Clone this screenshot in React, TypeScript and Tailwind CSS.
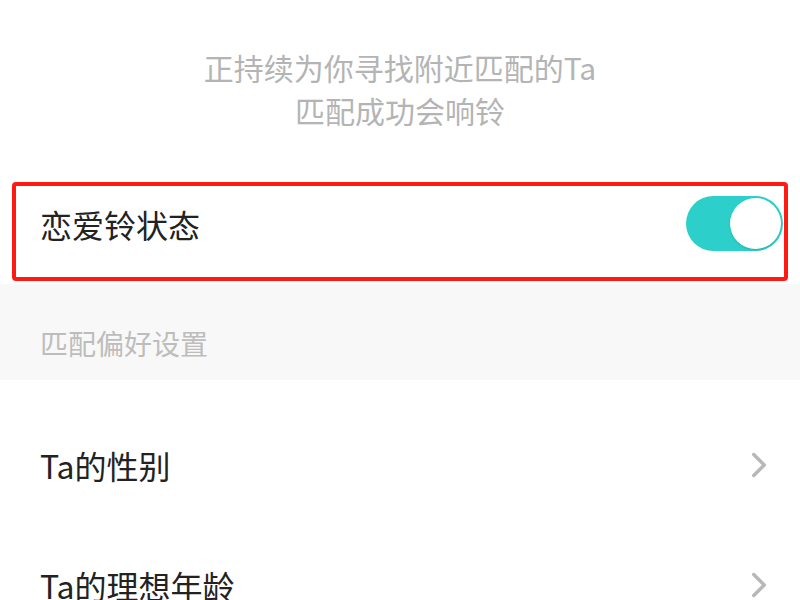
import { ChevronRight } from 'lucide-react';

const FONT = { fontFamily: '"Noto Sans CJK SC", "Noto Sans", sans-serif' };

const PREFS = ['Ta的性别', 'Ta的理想年龄'];

export default function App() {
  return (
    <div className="h-[600px] w-[800px] overflow-hidden bg-white" style={FONT}>
      {/* searching hint */}
      <div className="flex flex-col items-center pt-[46px] text-[30px] leading-[43px] text-[#b4b4b4]">
        <p>正持续为你寻找附近匹配的Ta</p>
        <p>匹配成功会响铃</p>
      </div>

      {/* love bell status, highlighted */}
      <div className="mx-[12px] mt-[50px] flex h-[99px] items-center justify-between rounded-[4px] border-[4px] border-[#ff1a14] pb-[16px] pl-[24px] pr-[1px]">
        <span className="text-[32px] text-[#222]">恋爱铃状态</span>
        <div className="flex h-[55px] w-[97px] items-center justify-end rounded-full bg-[#2ccfc9] p-[2px]">
          <span className="h-[51px] w-[51px] rounded-full bg-white shadow-[0_1px_2px_rgba(0,0,0,0.15)]" />
        </div>
      </div>

      {/* section header */}
      <div className="mt-[3px] flex h-[96px] items-center bg-[#f8f8f8] px-[40px] pt-[22px] text-[28px] text-[#bdbdbd]">
        匹配偏好设置
      </div>

      <div className="pt-[25px]">
        {PREFS.map((p) => (
          <div key={p} className="flex h-[120px] items-center justify-between pl-[40px] pr-[20px]">
            <span className="text-[32px] text-[#222]">{p}</span>
            <ChevronRight size={42} strokeWidth={2} className="text-[#b8b8b8]" />
          </div>
        ))}
      </div>
    </div>
  );
}
